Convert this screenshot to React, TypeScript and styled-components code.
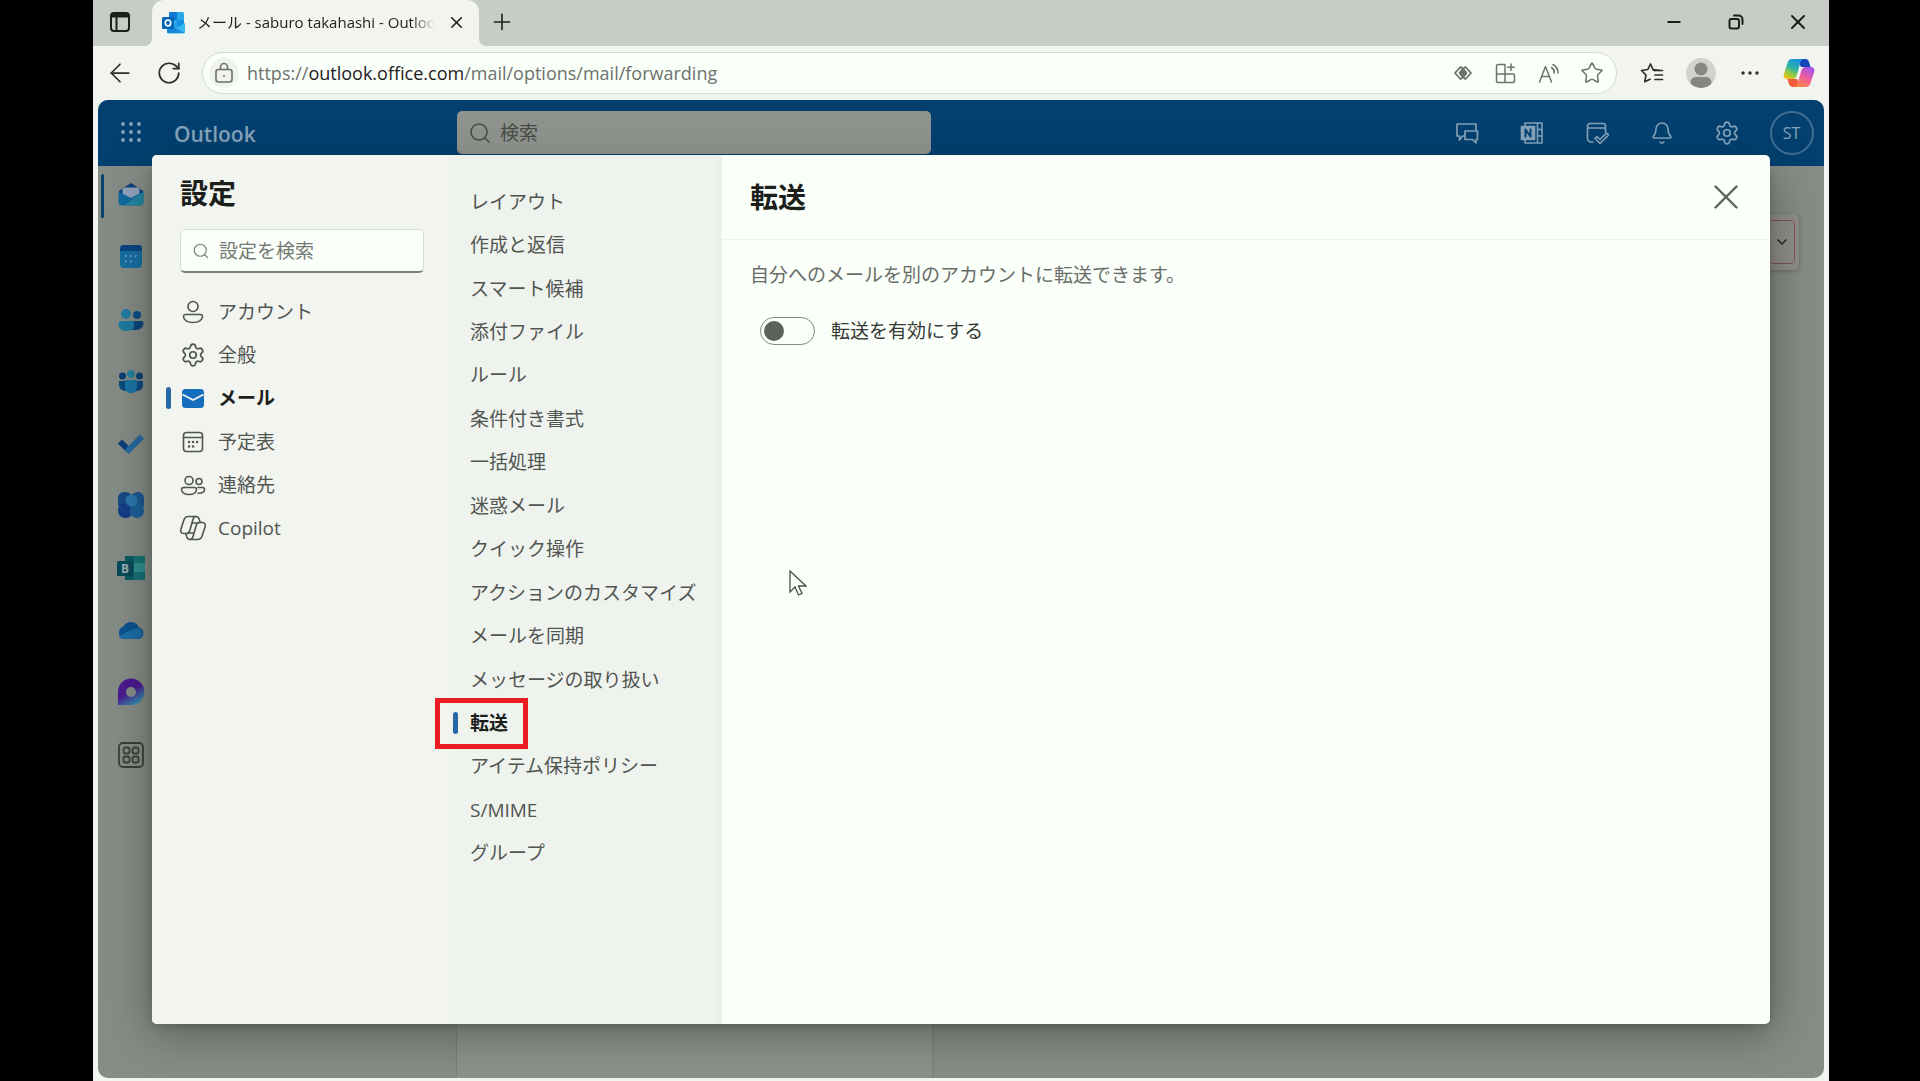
import React from "react";
import styled, { createGlobalStyle, css } from "styled-components";
import { ArrowLeft, Bell, ChevronDown, Minus, Plus, RotateCw, Search, Settings, Star, X } from "lucide-react";

const Global = createGlobalStyle`
  *, *::before, *::after { box-sizing: border-box; }
  body { margin: 0; background: #000; }
  body, button, input { font-family: "Open Sans", "Noto Sans CJK JP", sans-serif; }
  button { border: 0; padding: 0; background: none; color: inherit; font-size: inherit; }
  ul { list-style: none; margin: 0; padding: 0; }
  h1, h2, p { margin: 0; }
  svg { display: block; flex: none; }
`;

/* ---------- browser window ---------- */

const Stage = styled.div`
  display: flex;
  height: 100vh;
  padding: 0 91px 0 93px;
  background: #000;
`;

const BrowserWindow = styled.div`
  display: flex;
  flex: 1;
  flex-direction: column;
  min-width: 0;
  background: #f1f4ef;
`;

const TabStrip = styled.div`
  display: flex;
  flex: none;
  height: 46px;
  background: #c8ccc6;
  color: #1c1f1c;
`;

const TabActions = styled.button`
  display: grid;
  place-items: center;
  width: 59px;
  padding: 0 5px 2px 0;
`;

const Tab = styled.div`
  position: relative;
  display: flex;
  align-items: center;
  width: 327px;
  gap: 12px;
  padding: 0 13px 2px 10px;
  border-radius: 12px 12px 0 0;
  background: #f1f4ef;
  &::before, &::after {
    content: "";
    position: absolute;
    bottom: 0;
    width: 8px;
    height: 8px;
  }
  &::before { left: -8px; background: radial-gradient(circle at 0 0, transparent 8px, #f1f4ef 8px); }
  &::after { right: -8px; background: radial-gradient(circle at 100% 0, transparent 8px, #f1f4ef 8px); }
`;

const TabTitle = styled.span`
  flex: 1;
  overflow: hidden;
  white-space: nowrap;
  font-size: 15px;
  line-height: 24px;
  mask-image: linear-gradient(90deg, #000 90%, transparent);
`;

const StripSpacer = styled.div`
  flex: 1;
`;

const WindowButton = styled.button<{ $width?: number }>`
  display: grid;
  place-items: center;
  width: ${(p) => p.$width ?? 62}px;
  padding-bottom: 2px;
`;

const Toolbar = styled.div`
  display: flex;
  flex: none;
  align-items: center;
  height: 54px;
  padding: 0 6px 0 2px;
  color: #2b2e2b;
`;

const ToolButton = styled.button`
  display: grid;
  place-items: center;
  width: 49px;
  height: 42px;
`;

const AddressBar = styled.div`
  display: flex;
  flex: 1;
  align-items: center;
  min-width: 0;
  height: 42px;
  margin: 0 10px 0 9px;
  padding: 0 3px 0 6px;
  border: 1px solid #d6dad4;
  border-radius: 21px;
  background: #fafff9;
  color: #6d716d;
`;

const SiteInfo = styled.button`
  display: grid;
  place-items: center;
  width: 30px;
  height: 30px;
  margin-right: 8px;
  border-radius: 50%;
  background: #eff2ed;
`;

const Url = styled.span`
  flex: 1;
  overflow: hidden;
  white-space: nowrap;
  font-size: 18px;
  line-height: 28px;
  & strong { font-weight: 400; color: #1d201d; }
`;

const AddressButton = styled.button`
  display: grid;
  place-items: center;
  width: 43px;
  height: 40px;
`;

/* ---------- Outlook page, dimmed behind the dialog ---------- */

const Page = styled.div`
  position: relative;
  display: flex;
  flex: 1;
  flex-direction: column;
  min-height: 0;
  margin: 0 5px 3px 5px;
  overflow: hidden;
  border-radius: 10px;
  background: #868c86;
`;

const SuiteHeader = styled.header`
  display: flex;
  flex: none;
  align-items: flex-start;
  height: 66px;
  background: #03406f;
  color: #83a2b9;
`;

const Waffle = styled.button`
  display: grid;
  place-items: center;
  width: 65px;
  height: 64px;
`;

const Brand = styled.div`
  width: 294px;
  padding-left: 11px;
  font-size: 21px;
  font-weight: 600;
  line-height: 68px;
`;

const SuiteSearch = styled.label`
  display: flex;
  align-items: center;
  flex: 0 1 474px;
  gap: 8px;
  height: 43px;
  margin-top: 11px;
  padding: 0 11px;
  border-radius: 5px;
  background: #8f938d;
  color: #474b47;
  & input {
    flex: 1;
    min-width: 0;
    padding: 0;
    border: 0;
    outline: 0;
    background: none;
    font-size: 19px;
    line-height: 28px;
  }
  & input::placeholder { color: #474b47; opacity: 1; }
`;

const SuiteActions = styled.div`
  display: flex;
  margin-left: auto;
`;

const SuiteButton = styled.button`
  display: grid;
  place-items: center;
  width: 65px;
  height: 66px;
`;

const Avatar = styled.span`
  display: grid;
  place-items: center;
  width: 44px;
  height: 44px;
  border: 2px solid #3f6f93;
  border-radius: 50%;
  font-size: 16px;
`;

const Body = styled.div`
  display: flex;
  flex: 1;
  min-height: 0;
`;

const Rail = styled.nav`
  width: 65px;
  padding-top: 14px;
`;

const RailList = styled.ul`
  display: grid;
  grid-template-rows: repeat(10, 1fr);
  height: 623px;
`;

const RailItem = styled.li<{ $active?: boolean }>`
  position: relative;
  display: flex;
  justify-content: center;
  height: 28px;
  ${(p) => p.$active && css`
    &::before {
      content: "";
      position: absolute;
      left: 3px;
      top: -6px;
      width: 3px;
      height: 44px;
      border-radius: 2px;
      background: #0a4474;
    }
  `}
`;

const Workspace = styled.main`
  display: flex;
  flex: 1;
  flex-direction: column;
  padding-top: 48px;
`;

const Ribbon = styled.div`
  display: flex;
  align-items: center;
  justify-content: flex-end;
  height: 56px;
  margin-right: 25px;
  padding-right: 4px;
  border-radius: 6px;
  background: #918f8b;
  box-shadow: 0 1px 4px rgba(0, 0, 0, 0.25);
`;

const RibbonToggle = styled.button`
  display: grid;
  place-items: center;
  width: 26px;
  height: 44px;
  border: 1px solid #85514d;
  border-left-color: transparent;
  border-radius: 5px;
  color: #2c2f2c;
`;

const Panes = styled.div`
  display: grid;
  flex: 1;
  grid-template-columns: 294px 475px 1fr;
`;

const Pane = styled.div<{ $raised?: boolean }>`
  background: ${(p) => (p.$raised ? "#8c928b" : "transparent")};
  box-shadow: ${(p) => (p.$raised ? "0 0 2px rgba(0, 0, 0, 0.25)" : "none")};
`;

/* ---------- settings dialog ---------- */

const Dialog = styled.section`
  position: absolute;
  inset: 55px 54px 54px 54px;
  display: grid;
  grid-template-columns: 299px 271px 1fr;
  overflow: hidden;
  border-radius: 5px;
  background: #fafff9;
`;

const DialogShadow = styled.div`
  position: absolute;
  inset: 66px 54px 54px 54px;
  border-radius: 5px;
  box-shadow: 0 8px 48px rgba(0, 0, 0, 0.36), 0 2px 10px rgba(0, 0, 0, 0.16);
`;

const Categories = styled.div`
  padding: 18px 27px 0 28px;
  background: #f1f4ef;
`;

const Heading = styled.h2`
  color: #1b1e1b;
  font-size: 28px;
  font-weight: 700;
  line-height: 40px;
`;

const SettingsSearch = styled.label`
  display: flex;
  align-items: center;
  gap: 9px;
  height: 44px;
  margin-top: 16px;
  padding: 0 11px;
  border: 1px solid #d9ddd7;
  border-bottom: 2px solid #7b7f7b;
  border-radius: 5px;
  background: #fafff9;
  color: #7b7f7b;
  & input {
    flex: 1;
    min-width: 0;
    padding: 0;
    border: 0;
    outline: 0;
    background: none;
    font-size: 19px;
    line-height: 28px;
  }
  & input::placeholder { color: #757975; opacity: 1; }
`;

const NavList = styled.ul<{ $rows: number; $height: number; $top: number }>`
  display: grid;
  grid-template-rows: repeat(${(p) => p.$rows}, 1fr);
  height: ${(p) => p.$height}px;
  margin-top: ${(p) => p.$top}px;
`;

const NavItem = styled.li`
  position: relative;
  display: flex;
`;

const NavButton = styled.button<{ $active?: boolean; $marker: number }>`
  position: relative;
  display: flex;
  align-items: center;
  flex: 1;
  gap: 12px;
  color: ${(p) => (p.$active ? "#1b1e1b" : "#515551")};
  font-size: 19px;
  font-weight: ${(p) => (p.$active ? 700 : 400)};
  line-height: 28px;
  text-align: left;
  white-space: nowrap;
  ${(p) => p.$active && css`
    &::before {
      content: "";
      position: absolute;
      left: ${p.$marker}px;
      width: 5px;
      height: 22px;
      border-radius: 3px;
      background: #2568a4;
    }
  `}
`;

const Sections = styled.div`
  padding: 0 10px 0 18px;
  border-left: 1px solid #edf1ec;
  border-right: 5px solid #edf1ec;
  background: #eff3ee;
`;

const Callout = styled.span`
  position: absolute;
  left: -35px;
  top: 50%;
  width: 93px;
  height: 51px;
  margin-top: -25px;
  border: 5px solid #ec1c24;
  pointer-events: none;
`;

const Detail = styled.div`
  display: flex;
  flex-direction: column;
`;

const DetailHeader = styled.div`
  display: flex;
  align-items: center;
  justify-content: space-between;
  height: 85px;
  padding: 0 22px 0 28px;
  border-bottom: 1px solid #eef2ed;
`;

const CloseButton = styled.button`
  display: grid;
  place-items: center;
  width: 44px;
  height: 44px;
  color: #5e625e;
`;

const DetailBody = styled.div`
  padding: 21px 28px;
`;

const Description = styled.p`
  color: #696d69;
  font-size: 19px;
  line-height: 28px;
`;

const ToggleRow = styled.label`
  display: flex;
  align-items: center;
  gap: 16px;
  margin: 28px 0 0 10px;
  color: #363936;
  font-size: 19px;
  line-height: 28px;
`;

const Toggle = styled.input`
  appearance: none;
  display: flex;
  align-items: center;
  width: 55px;
  height: 28px;
  margin: 0;
  padding: 0 3px;
  border: 1px solid #858985;
  border-radius: 14px;
  &::before {
    content: "";
    width: 20px;
    height: 20px;
    border-radius: 50%;
    background: #5c615c;
  }
  &:checked { justify-content: flex-end; }
`;

const Pointer = styled.svg`
  position: absolute;
  left: 691px;
  top: 470px;
`;

/* ---------- drawings ---------- */

const Line = styled.svg.attrs({ fill: "none", stroke: "currentColor", strokeLinecap: "round", strokeLinejoin: "round" })``;

const TabActionsIcon = () => (
  <Line width="22" height="22" viewBox="0 0 22 22" strokeWidth="2">
    <rect x="2" y="2" width="18" height="18" rx="3" />
    <path d="M3 5.5h16M7.5 7v12" />
    <path d="M3 4h16" strokeWidth="3" />
  </Line>
);

const OutlookIcon = () => (
  <svg width="23" height="23" viewBox="0 0 23 23" aria-hidden="true">
    <rect x="7" y="1" width="15" height="16" rx="1.5" fill="#28a8ea" />
    <path d="M7 1h8v8H7z" fill="#0f78d4" />
    <path d="M15 9h7v7h-7z" fill="#1490df" />
    <path d="M5 12l9 5 9-5v9a1.500 1.500 0 0 1-1.500 1.500H6.500A1.500 1.500 0 0 1 5 21z" fill="#35b8f1" />
    <path d="M5 12l17 10H6.500A1.500 1.500 0 0 1 5 21z" fill="#1a86d9" />
    <rect x="0" y="6" width="12" height="12" rx="1.500" fill="#0364b8" />
    <ellipse cx="6" cy="12" rx="2.700" ry="3" fill="none" stroke="#fff" strokeWidth="1.700" />
  </svg>
);

const RestoreIcon = () => (
  <Line width="16" height="16" viewBox="0 0 16 16" strokeWidth="2">
    <rect x="1.500" y="5" width="9.500" height="9.500" rx="2" />
    <path d="M6 1.500h4.500a4 4 0 0 1 4 4V10" />
  </Line>
);

const LockIcon = () => (
  <Line width="20" height="22" viewBox="0 0 20 22" strokeWidth="1.600">
    <rect x="2" y="7.500" width="16" height="12.500" rx="2.500" />
    <path d="M6.500 7V5a3.500 3.500 0 0 1 7 0v2" />
    <circle cx="10" cy="13.700" r="1" fill="currentColor" stroke="none" />
  </Line>
);

const DiamondIcon = () => (
  <Line width="18" height="16" viewBox="0 0 18 16" strokeWidth="1.800">
    <path d="M6.500 14L1 8l5.500-6 1.500 1M11.500 14L17 8l-5.500-6-1.500 1M6.500 14l1.500-1M11.500 14l-1.500-1" />
    <path d="M9 3.500L12.500 8 9 12.500 5.500 8z" fill="currentColor" />
  </Line>
);

const AppsAddIcon = () => (
  <Line width="21" height="21" viewBox="0 0 21 21" strokeWidth="1.500">
    <path d="M10 1.500H3A1.500 1.500 0 0 0 1.500 3v15A1.500 1.500 0 0 0 3 19.500h15a1.500 1.500 0 0 0 1.500-1.500v-5.500a1.500 1.500 0 0 0-1.500-1.500H1.500M10 1.500v18" />
    <path d="M16 1v6.500M12.700 4.200h6.500" />
  </Line>
);

const ReadAloudIcon = () => (
  <Line width="22" height="21" viewBox="0 0 22 21" strokeWidth="1.500">
    <path d="M1.500 19L7.500 3.500 13.500 19M3.700 13.500h7.600" />
    <path d="M13.500 4.500a6 6 0 0 1 2.800 5.500M15 1.500a9.500 9.500 0 0 1 5 8.500" />
  </Line>
);

const FavoritesIcon = () => (
  <Line width="24" height="23" viewBox="0 0 24 23" strokeWidth="1.700">
    <path d="M14.500 8.500L13 7.500 10.500 2 7.800 7.500 1.500 8.500 6 13l-1.200 6.700L10 17.200M13 7.500l7 1" />
    <path d="M15 8.500h7.500M15 13h7.500M15 17.500h7.500" />
  </Line>
);

const ProfileIcon = () => (
  <svg width="30" height="30" viewBox="0 0 30 30" aria-hidden="true">
    <clipPath id="face"><circle cx="15" cy="15" r="15" /></clipPath>
    <g clipPath="url(#face)">
      <rect width="30" height="30" fill="#d3d2cf" />
      <circle cx="15" cy="11" r="6.500" fill="#878683" />
      <rect x="4.500" y="19" width="21" height="11" rx="5.500" fill="#878683" />
    </g>
  </svg>
);

const MoreIcon = () => (
  <svg width="20" height="20" viewBox="0 0 20 20" fill="currentColor">
    <circle cx="3" cy="10" r="1.700" /><circle cx="10" cy="10" r="1.700" /><circle cx="17" cy="10" r="1.700" />
  </svg>
);

const CopilotColor = () => (
  <svg width="32" height="30" viewBox="0 0 32 30" aria-hidden="true">
    <defs>
      <linearGradient id="cpA" x1="0.700" y1="0" x2="0.200" y2="1">
        <stop offset="0" stopColor="#1b8fe4" /><stop offset="0.450" stopColor="#2bb3a8" /><stop offset="0.750" stopColor="#9ccb3b" /><stop offset="1" stopColor="#f5c21b" />
      </linearGradient>
      <linearGradient id="cpB" x1="0.700" y1="0" x2="0.200" y2="1">
        <stop offset="0" stopColor="#a653e8" /><stop offset="0.500" stopColor="#f0609c" /><stop offset="1" stopColor="#ff8a3c" />
      </linearGradient>
    </defs>
    <path d="M14 1h8.500a4 4 0 0 1 3.600 3l1.400 5H18z" fill="#1546b8" />
    <path d="M18 29H9.500a4 4 0 0 1-3.600-3l-1.400-5H14z" fill="#ef5c38" />
    <path d="M9 1h12c-2 0-3 1.500-3.600 3.500L14 16.500c-.800 3-2 4.500-4.500 4.500H4c-3 0-4-2.500-3-5.500L4.500 5C5.300 2.500 6.500 1 9 1z" fill="url(#cpA)" />
    <path d="M23 29H11c2 0 3-1.500 3.600-3.500L18 13.500C18.800 10.500 20 9 22.500 9H28c3 0 4 2.500 3 5.500L27.500 25c-.800 2.500-2 4-4.500 4z" fill="url(#cpB)" />
  </svg>
);

const WaffleIcon = () => (
  <svg width="22" height="22" viewBox="0 0 22 22" fill="currentColor">
    {[3, 11, 19].map((y) => [3, 11, 19].map((x) => <circle key={`${x}-${y}`} cx={x} cy={y} r="1.900" />))}
  </svg>
);

const ChatIcon = () => (
  <Line width="24" height="24" viewBox="0 0 24 24" strokeWidth="1.700">
    <path d="M9 15H7.500L4.500 19v-4H2V3h19v6" />
    <path d="M10 10h12.500v8.500H21V22l-3.500-3.500H10z" />
  </Line>
);

const OneNoteIcon = () => (
  <Line width="24" height="24" viewBox="0 0 24 24" strokeWidth="1.600">
    <path d="M5 5V2h17v20H5v-3M17.500 2v20M17.500 8.500H22M17.500 15H22" />
    <rect x="1.500" y="5.500" width="13" height="13" fill="currentColor" />
    <path d="M5.500 15.500v-7l5 7v-7" stroke="#03406f" strokeWidth="2" />
  </Line>
);

const DayIcon = () => (
  <Line width="24" height="24" viewBox="0 0 24 24" strokeWidth="1.700">
    <path d="M8 21H6a3.500 3.500 0 0 1-3.500-3.500V5A2.500 2.500 0 0 1 5 2.500h13A2.500 2.500 0 0 1 20.500 5v6M2.500 7h18" />
    <path d="M10 17.500l2-2 3 3 6.500-6.500 2 2-8.500 8.500z" />
  </Line>
);

const SettingsLine = ({ size }: { size: number }) => <Settings size={size} strokeWidth={1.600} />;

const PersonIcon = () => (
  <Line width="26" height="26" viewBox="0 0 26 26" strokeWidth="1.600">
    <circle cx="13" cy="7.500" r="5" />
    <path d="M5.500 15.500h15a2 2 0 0 1 2 2c0 3.500-4 6-9.500 6s-9.500-2.500-9.500-6a2 2 0 0 1 2-2z" />
  </Line>
);

const MailIcon = () => (
  <svg width="26" height="26" viewBox="0 0 26 26">
    <rect x="2" y="4" width="22" height="19" rx="3.500" fill="#156ebd" />
    <path d="M2.500 9.500L13 15l10.500-5.500" fill="none" stroke="#f1f4ef" strokeWidth="1.700" />
  </svg>
);

const CalendarIcon = () => (
  <Line width="26" height="26" viewBox="0 0 26 26" strokeWidth="1.600">
    <rect x="3.500" y="3.500" width="19" height="19" rx="3" />
    <path d="M3.500 8.500h19" />
    <path d="M9 13h.1M13 13h.1M17 13h.1M9 17.500h.1M13 17.500h.1" strokeWidth="2.400" />
  </Line>
);

const PeopleIcon = () => (
  <Line width="26" height="26" viewBox="0 0 26 26" strokeWidth="1.600">
    <circle cx="9" cy="8.500" r="4" />
    <circle cx="19" cy="9.500" r="3" />
    <path d="M3.500 15.500h11a2 2 0 0 1 2 2c0 3-3 5-7.500 5s-7.500-2-7.500-5a2 2 0 0 1 2-2zM18 15.500h4.500a2 2 0 0 1 2 2c0 2.500-2.500 4-6.500 3.800" />
  </Line>
);

const CopilotLine = () => (
  <Line width="26" height="26" viewBox="0 0 26 26" strokeWidth="1.600">
    <path d="M8.500 1.500h7.500c-1.800 0-2.500 1.200-3 3l-3.200 11c-.500 2-1.500 3-3.500 3H3.500c-2.500 0-3.200-2-2.500-4.500l2.900-9C4.700 2.500 6 1.500 8.500 1.500z" />
    <path d="M17.500 24.500h-7.500c1.800 0 2.500-1.200 3-3l3.200-11c.500-2 1.500-3 3.500-3h2.800c2.500 0 3.200 2 2.500 4.500l-2.900 9c-.800 2.500-2.100 3.500-4.600 3.500z" />
    <path d="M16 1.500c1.800 0 2.700 1 3.200 2.500l1 3.500M10 24.500c-1.800 0-2.700-1-3.200-2.500l-1-3.500M12 8h6M8 18h6" />
  </Line>
);

const RailMail = () => (
  <svg width="28" height="28" viewBox="0 0 28 28">
    <path d="M2 11L14 3l12 8v5H2z" fill="#0b3f7e" />
    <path d="M5.500 10c0-1.500 1-2.500 2.500-2.500h12c1.500 0 2.500 1 2.500 2.500v5L14 19l-8.500-4z" fill="#91a4bb" />
    <path d="M1.500 11.500L14 18l12.500-6.500V22a3.500 3.500 0 0 1-3.500 3.500H5A3.500 3.500 0 0 1 1.500 22z" fill="#126b9f" />
    <path d="M26.500 11.500L7 25.500h16a3.500 3.500 0 0 0 3.500-3.500z" fill="#25869f" />
  </svg>
);
const RailCalendar = () => (
  <svg width="28" height="28" viewBox="0 0 28 28">
    <rect x="3" y="3" width="22" height="23" rx="4" fill="#176fa3" />
    <path d="M7 3h14a4 4 0 0 1 4 4v2H3V7a4 4 0 0 1 4-4z" fill="#0a4683" />
    <path d="M8 14h1.500M13 14h1.500M18 14h1.500M8 19.500h1.500M13 19.500h1.500" stroke="#75aac0" strokeWidth="2.200" />
  </svg>
);
const RailPeople = () => (
  <svg width="28" height="28" viewBox="0 0 28 28">
    <circle cx="9" cy="9" r="5" fill="#237ba5" /><circle cx="20" cy="10" r="4" fill="#0d4f86" />
    <path d="M12 16h12.500a2 2 0 0 1 2 2c0 4-3 7-8 7h-6z" fill="#0b477d" />
    <path d="M3.500 16H17v6c-1 2.500-4 4-7.500 4-5 0-8-3-8-7a3 3 0 0 1 2-3z" fill="#1d7a9e" />
  </svg>
);
const RailGroups = () => (
  <svg width="28" height="28" viewBox="0 0 28 28">
    <circle cx="5.500" cy="9" r="3.500" fill="#0b3f76" /><circle cx="22.500" cy="9" r="3.500" fill="#0b3f76" /><circle cx="14" cy="7" r="4" fill="#28809f" />
    <path d="M2 14h24v3c0 5-3 7-7 7H9c-4 0-7-2-7-7z" fill="#0b4a80" />
    <path d="M8 13h12v7c0 4-2.500 6-6 6s-6-2-6-6z" fill="#1a75a4" />
  </svg>
);
const RailTodo = () => (
  <svg width="28" height="28" viewBox="0 0 28 28" fill="none" strokeWidth="6">
    <path d="M3 12.500l8.500 8.500" stroke="#0c407e" /><path d="M9.500 23L25 7.500" stroke="#246ba0" />
  </svg>
);
const RailEngage = () => (
  <svg width="28" height="28" viewBox="0 0 28 28">
    <rect x="1" y="1" width="14" height="18" rx="6" fill="#174a83" /><rect x="14" y="1" width="13" height="18" rx="6" fill="#1c5a95" />
    <rect x="1" y="12" width="15" height="15" rx="7" fill="#123f86" /><rect x="13" y="12" width="14" height="15" rx="7" fill="#1d6099" />
    <circle cx="14.500" cy="9.500" r="6" fill="#2c76ab" />
  </svg>
);
const RailBookings = () => (
  <svg width="28" height="28" viewBox="0 0 28 28">
    <path d="M8 2h12v24H8z" fill="#0e5c66" /><path d="M17 2h11v7H17z" fill="#177576" /><path d="M17 9h11v9H17z" fill="#329090" /><path d="M17 18h11v8H17z" fill="#197276" />
    <rect x="0" y="7" width="16" height="15" rx="1.500" fill="#084a5a" />
    <text x="8" y="18.500" textAnchor="middle" fontFamily="Open Sans, sans-serif" fontSize="12" fontWeight="700" fill="#9bb0b0">B</text>
  </svg>
);
const RailOneDrive = () => (
  <svg width="28" height="28" viewBox="0 0 28 28">
    <path d="M7 23a6.500 6.500 0 0 1-.500-12.500A8.500 8.500 0 0 1 22 11.500 6 6 0 0 1 22 23z" fill="#0b5391" />
    <path d="M1.500 20C8 18 13 13 21 12a6 6 0 0 1 1 11H7c-2.500 0-4.500-1-5.500-3z" fill="#1a6da8" />
  </svg>
);
const RailLoop = () => (
  <svg width="28" height="28" viewBox="0 0 28 28">
    <defs><linearGradient id="loop" x1="0" y1="0" x2="0.600" y2="1"><stop offset="0.550" stopColor="#4c1a90" /><stop offset="1" stopColor="#368db0" /></linearGradient></defs>
    <path fillRule="evenodd" d="M1 27V14A13.200 13.200 0 1 1 14 27zM14 9a5 5 0 1 0 0 10 5 5 0 0 0 0-10z" fill="url(#loop)" />
  </svg>
);
const RailApps = () => (
  <Line width="28" height="28" viewBox="0 0 28 28" strokeWidth="1.800" color="#3c403c">
    <rect x="2" y="2" width="24" height="24" rx="4" />
    <rect x="6.500" y="6.500" width="6" height="6" rx="2" /><rect x="15.500" y="6.500" width="6" height="6" rx="2" />
    <rect x="6.500" y="15.500" width="6" height="6" rx="2" /><rect x="15.500" y="15.500" width="6" height="6" rx="2" />
  </Line>
);

/* ---------- data ---------- */

const railApps = [
  { name: "mail", Icon: RailMail },
  { name: "calendar", Icon: RailCalendar },
  { name: "people", Icon: RailPeople },
  { name: "groups", Icon: RailGroups },
  { name: "todo", Icon: RailTodo },
  { name: "engage", Icon: RailEngage },
  { name: "bookings", Icon: RailBookings },
  { name: "onedrive", Icon: RailOneDrive },
  { name: "loop", Icon: RailLoop },
  { name: "apps", Icon: RailApps },
];

const categories = [
  { label: "アカウント", icon: <PersonIcon /> },
  { label: "全般", icon: <SettingsLine size={26} /> },
  { label: "メール", icon: <MailIcon /> },
  { label: "予定表", icon: <CalendarIcon /> },
  { label: "連絡先", icon: <PeopleIcon /> },
  { label: "Copilot", icon: <CopilotLine /> },
];

const sections = [
  "レイアウト", "作成と返信", "スマート候補", "添付ファイル", "ルール", "条件付き書式", "一括処理", "迷惑メール",
  "クイック操作", "アクションのカスタマイズ", "メールを同期", "メッセージの取り扱い", "転送",
  "アイテム保持ポリシー", "S/MIME", "グループ",
];

export default function App() {
  return (
    <Stage>
      <Global />
      <BrowserWindow>
        <TabStrip>
          <TabActions><TabActionsIcon /></TabActions>
          <Tab>
            <OutlookIcon />
            <TabTitle>メール - saburo takahashi - Outlook</TabTitle>
            <button><X size={19} strokeWidth={2} /></button>
          </Tab>
          <WindowButton $width={46}><Plus size={26} strokeWidth={1.500} /></WindowButton>
          <StripSpacer />
          <WindowButton><Minus size={20} strokeWidth={2.200} /></WindowButton>
          <WindowButton><RestoreIcon /></WindowButton>
          <WindowButton><X size={24} strokeWidth={2} /></WindowButton>
        </TabStrip>
        <Toolbar>
          <ToolButton><ArrowLeft size={30} strokeWidth={1.400} /></ToolButton>
          <ToolButton><RotateCw size={26} strokeWidth={1.600} /></ToolButton>
          <AddressBar>
            <SiteInfo><LockIcon /></SiteInfo>
            <Url>https://<strong>outlook.office.com</strong>/mail/options/mail/forwarding</Url>
            <AddressButton><DiamondIcon /></AddressButton>
            <AddressButton><AppsAddIcon /></AddressButton>
            <AddressButton><ReadAloudIcon /></AddressButton>
            <AddressButton><Star size={24} strokeWidth={1.500} /></AddressButton>
          </AddressBar>
          <ToolButton><FavoritesIcon /></ToolButton>
          <ToolButton><ProfileIcon /></ToolButton>
          <ToolButton><MoreIcon /></ToolButton>
          <ToolButton><CopilotColor /></ToolButton>
        </Toolbar>

        <Page>
          <SuiteHeader>
            <Waffle><WaffleIcon /></Waffle>
            <Brand>Outlook</Brand>
            <SuiteSearch>
              <Search size={24} strokeWidth={1.500} />
              <input type="search" placeholder="検索" />
            </SuiteSearch>
            <SuiteActions>
              <SuiteButton><ChatIcon /></SuiteButton>
              <SuiteButton><OneNoteIcon /></SuiteButton>
              <SuiteButton><DayIcon /></SuiteButton>
              <SuiteButton><Bell size={24} strokeWidth={1.600} /></SuiteButton>
              <SuiteButton><SettingsLine size={26} /></SuiteButton>
              <SuiteButton><Avatar>ST</Avatar></SuiteButton>
            </SuiteActions>
          </SuiteHeader>
          <Body>
            <Rail>
              <RailList>
                {railApps.map(({ name, Icon }) => (
                  <RailItem key={name} $active={name === "mail"}><Icon /></RailItem>
                ))}
              </RailList>
            </Rail>
            <Workspace>
              <Ribbon><RibbonToggle><ChevronDown size={16} strokeWidth={2.500} /></RibbonToggle></Ribbon>
              <Panes><Pane /><Pane $raised /><Pane /></Panes>
            </Workspace>
          </Body>

          <DialogShadow />
          <Dialog role="dialog">
            <Categories>
              <Heading>設定</Heading>
              <SettingsSearch>
                <Search size={18} strokeWidth={1.500} />
                <input type="search" placeholder="設定を検索" />
              </SettingsSearch>
              <NavList $rows={6} $height={260} $top={17}>
                {categories.map(({ label, icon }) => (
                  <NavItem key={label}>
                    <NavButton $active={label === "メール"} $marker={-14}>{icon}{label}</NavButton>
                  </NavItem>
                ))}
              </NavList>
            </Categories>
            <Sections>
              <NavList $rows={16} $height={695} $top={25}>
                {sections.map((label) => (
                  <NavItem key={label}>
                    <NavButton $active={label === "転送"} $marker={-17}>{label}</NavButton>
                    {label === "転送" && <Callout />}
                  </NavItem>
                ))}
              </NavList>
            </Sections>
            <Detail>
              <DetailHeader>
                <Heading as="h1">転送</Heading>
                <CloseButton><X size={42} strokeWidth={1.400} /></CloseButton>
              </DetailHeader>
              <DetailBody>
                <Description>自分へのメールを別のアカウントに転送できます。</Description>
                <ToggleRow htmlFor="forwarding">
                  <Toggle id="forwarding" type="checkbox" role="switch" />
                  転送を有効にする
                </ToggleRow>
              </DetailBody>
            </Detail>
          </Dialog>
          <Pointer width="18" height="27" viewBox="0 0 18 27">
            <path d="M1 1v21l5-5 3.500 8 3.500-1.500L9.500 16H17z" fill="#fafff9" stroke="#4a4e4a" strokeWidth="1.300" />
          </Pointer>
        </Page>
      </BrowserWindow>
    </Stage>
  );
}
